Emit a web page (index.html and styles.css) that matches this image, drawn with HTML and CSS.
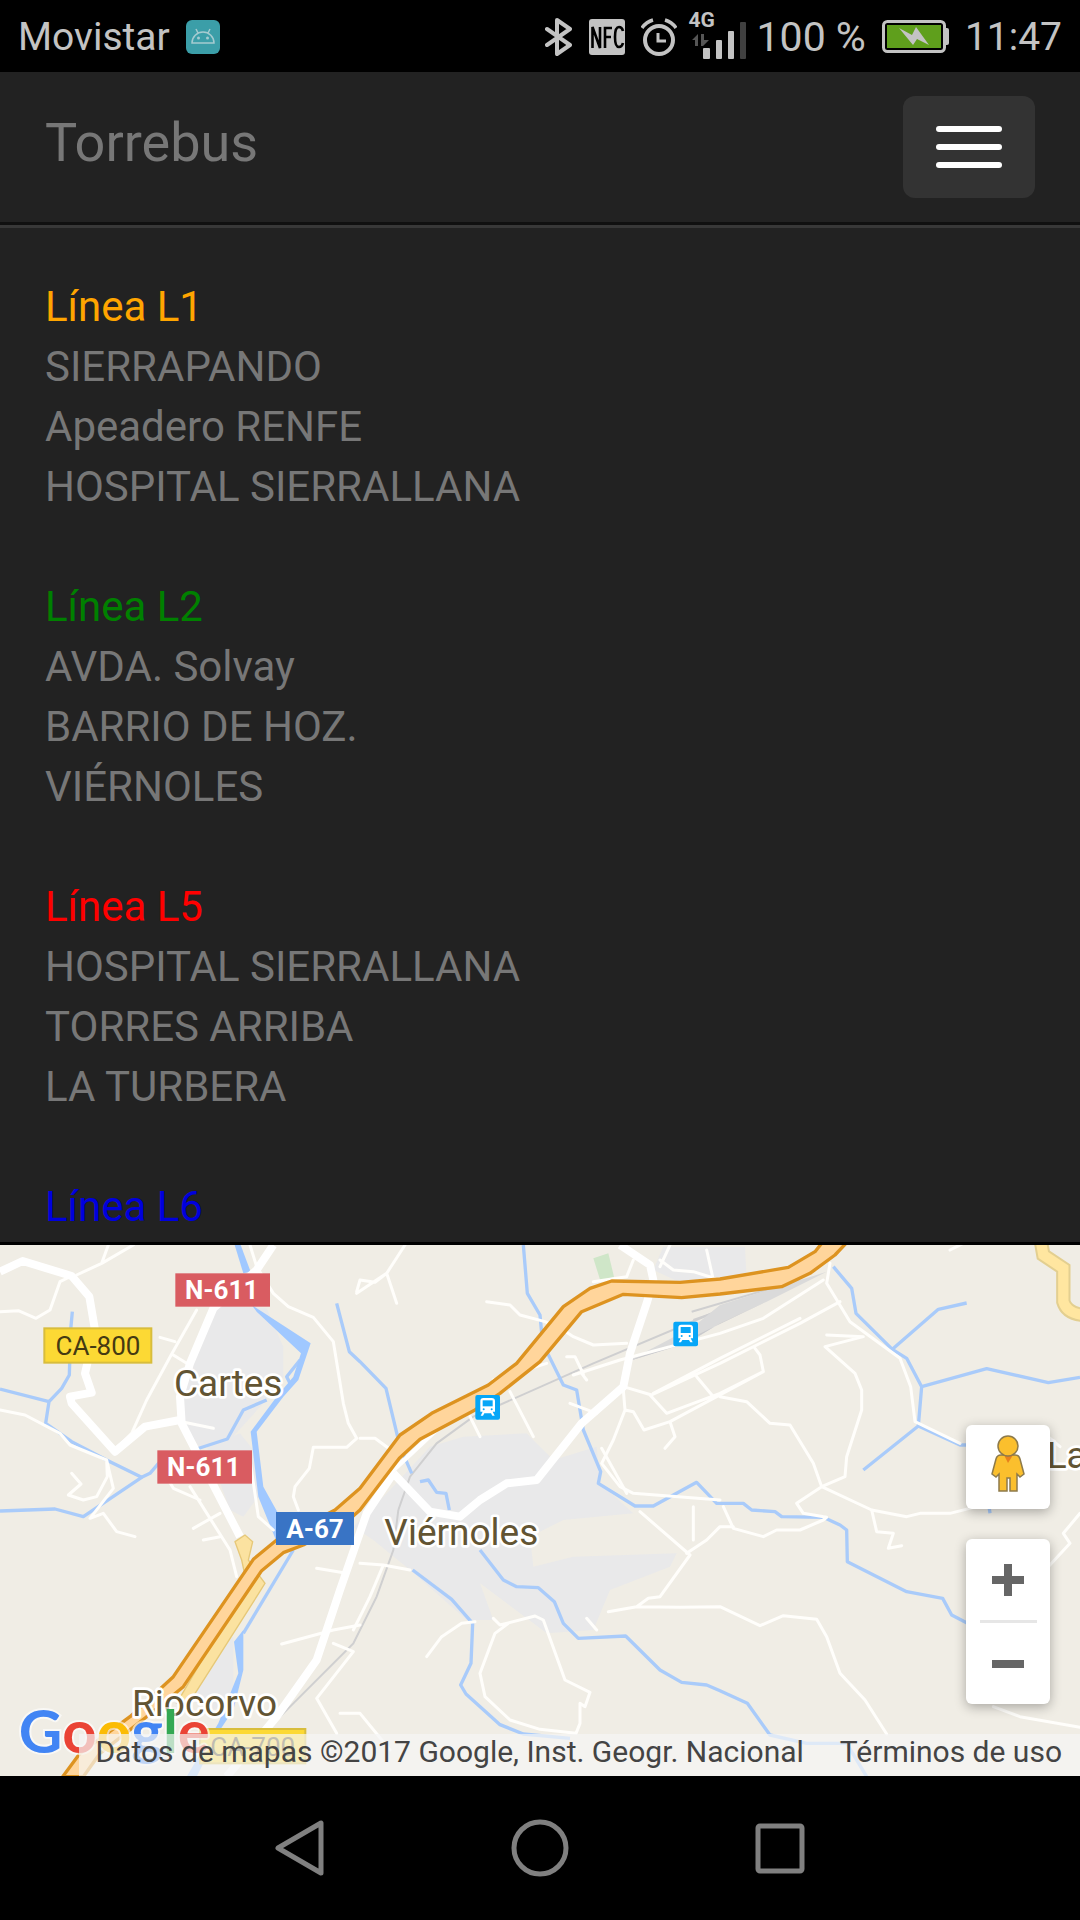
FILE: index.html
```html
<!DOCTYPE html>
<html lang="es">
<head>
  <meta charset="UTF-8">
  <meta name="viewport" content="width=device-width, initial-scale=1.0">
  <title>Torrebus</title>
  <link rel="stylesheet" href="styles.css">
</head>
<body>
  <div class="status-bar">
    <span>Movistar</span>
    <svg class="app-icon" width="34" height="34" viewBox="0 0 34 34">
      <rect width="34" height="34" rx="6" fill="#3b9ea8"/>
      <path d="M6 23a11 11 0 0 1 22 0z M12 13l-2-4 M22 13l2-4" fill="none" stroke="#a5cbd0" stroke-width="1.5"/>
      <circle cx="12.500" cy="18" r="1.500" fill="#a5cbd0"/>
      <circle cx="21.500" cy="18" r="1.500" fill="#a5cbd0"/>
    </svg>
    <div class="status-icons">
      <svg width="28" height="38" viewBox="0 0 28 38">
        <path d="M2 11l23 16-13 9V2l13 9L2 27" fill="none" stroke="#c3c3c3" stroke-width="4" stroke-linejoin="round" stroke-linecap="round"/>
      </svg>
      <svg width="36" height="36" viewBox="0 0 36 36">
        <rect width="36" height="36" rx="3" fill="#c3c3c3"/>
        <path d="M3.500 29V8L11 29V8 M16 29V9h7 M16 18h6 M34 12q-1-4-4-4-4 0-4 10t4 10q3 0 4-4" fill="none" stroke="#000" stroke-width="2.600"/>
      </svg>
      <svg width="36" height="38" viewBox="0 0 36 38">
        <circle cx="18" cy="22" r="14" fill="none" stroke="#c3c3c3" stroke-width="4"/>
        <path d="M17 15v8h8" fill="none" stroke="#c3c3c3" stroke-width="3"/>
        <path d="M1 10q4-6 11-8 M24 2q7 2 11 8" fill="none" stroke="#c3c3c3" stroke-width="3.500"/>
      </svg>
      <div class="signal">
        <span>4G</span>
        <svg width="58" height="44" viewBox="0 0 58 44">
          <path d="M3 25l6-6v12h-3v-6z M12 19h3v6h5l-6 6h-2z" fill="#555"/>
          <rect x="14" y="33" width="7" height="11" rx="1" fill="#c3c3c3"/>
          <rect x="27" y="25" width="6" height="19" rx="1" fill="#c3c3c3"/>
          <rect x="39" y="16" width="6" height="28" rx="1" fill="#c3c3c3"/>
          <rect x="51" y="7" width="6" height="37" rx="1" fill="#404040"/>
        </svg>
      </div>
      <span class="percent">100 %</span>
      <svg class="battery" width="67" height="34" viewBox="0 0 67 34">
        <rect x="1.500" y="1.500" width="61" height="30" rx="4" fill="none" stroke="#c3c3c3" stroke-width="3"/>
        <path d="M63 8h2q2 0 2 2v13q0 2-2 2h-2z" fill="#c3c3c3"/>
        <rect x="5" y="5" width="54" height="23" fill="#5f9f1c"/>
        <path d="M17 8l13 7 4-8 13 18-12-6-4 6z" fill="#c3c3c3"/>
      </svg>
      <span>11:47</span>
    </div>
  </div>

  <header class="navbar">
    <a class="brand" href="#">Torrebus</a>
    <button class="toggle" type="button" aria-label="Menú">
      <span class="icon-bar"></span>
      <span class="icon-bar"></span>
      <span class="icon-bar"></span>
    </button>
  </header>

  <main class="lines">
    <section class="line">
      <h2 class="l1">Línea L1</h2>
      <p>SIERRAPANDO</p>
      <p>Apeadero RENFE</p>
      <p>HOSPITAL SIERRALLANA</p>
    </section>
    <section class="line">
      <h2 class="l2">Línea L2</h2>
      <p>AVDA. Solvay</p>
      <p>BARRIO DE HOZ.</p>
      <p>VIÉRNOLES</p>
    </section>
    <section class="line">
      <h2 class="l5">Línea L5</h2>
      <p>HOSPITAL SIERRALLANA</p>
      <p>TORRES ARRIBA</p>
      <p>LA TURBERA</p>
    </section>
    <section class="line">
      <h2 class="l6">Línea L6</h2>
    </section>
  </main>

  <div class="map">
    <svg class="map-canvas" viewBox="0 45 3240 1593" preserveAspectRatio="xMidYMid slice">
      <rect y="45" width="3240" height="1593" fill="#f0ede5"/>

      <!-- built-up areas -->
      <g fill="#e9e9ea">
        <path d="M635 225L800 235L850 350L850 440L790 520L690 630L600 655L550 580L545 500L580 380z"/>
        <path d="M620 650L720 610L760 660L775 800L730 860L690 840z"/>
        <path d="M640 1270L700 1220L700 1400L640 1440L570 1410z"/>
        <path d="M1390 620L1580 610L1660 690L1790 650L1800 760L1900 850L1690 870L1590 920L1600 1010L1720 980L2030 970L2010 1010L1830 1080L1780 1200L1640 1210L1560 1150L1440 1060L1480 1170L1400 1170L1230 1020L1120 930L1060 890L1170 780L1290 650z"/>
        <path d="M1990 50L2235 50L2240 150L2100 185L1960 120z"/>
      </g>
      <path d="M1780 85L1825 70L1842 140L1802 155z" fill="#cfe6c8"/>

      <!-- railway -->
      <g fill="none" stroke="#cfcfd0" stroke-width="6">
        <path d="M1195 840L1230 740L1310 640L1420 560L1780 400L2160 240"/>
        <path d="M1195 840L1180 960L1130 1100L1060 1240L880 1420L790 1510"/>
        <path d="M2075 245L2400 150 M2080 270L2370 170"/>
      </g>
      <path d="M1880 395L2080 290L2160 225L2480 125L2300 215L2160 280L2070 335z" fill="#dadada"/>
      <path d="M1880 395L2080 320L2320 205L2160 280L2060 340z" fill="#c9c9cc"/>

      <!-- rivers -->
      <g fill="none" stroke="#a9cbfa" stroke-width="10" stroke-linejoin="round">
        <path d="M217 245L212 300L208 435L185 475L147 515L0 477 M147 515L137 580L215 635L330 695L425 742L250 860L165 837L0 843"/>
        <path d="M425 742L450 730L480 695 M590 657L682 627L730 540L800 510"/>
        <path d="M900 390L860 440L870 460"/>
        <path d="M1010 220L1048 365L1080 395L1158 475L1200 650L1235 730"/>
        <path d="M1260 755L1285 750L1310 787L1338 790L1348 840"/>
        <path d="M1570 45L1582 190L1620 255L1628 340L1690 465L1730 480L1750 600L1802 725L1795 760L1905 828L1960 828L2090 757L2150 820L2230 820L2255 840L2325 845L2345 860L2470 862L2520 885L2540 900L2542 995L2720 1085L2828 1105L2855 1155L2960 1210"/>
        <path d="M1440 960L1510 1050L1550 1070L1615 1073L1663 1115L1690 1180L1735 1225L1877 1218L1980 1320L2045 1357L2120 1365L2160 1382L2242 1420L2310 1515L2420 1540L2540 1540L2600 1640"/>
        <path d="M1238 1020L1355 1108L1418 1180L1413 1300L1382 1365L1398 1392L1500 1484L1570 1512L1710 1525"/>
        <path d="M2500 110L2555 175L2568 250L2677 358L2720 385L2765 470L2755 588L2590 720 M2677 358L2815 238L2900 219 M2765 470L2960 416L3145 458L3240 442 M2755 588L2880 645L2940 645L2970 850"/>
        <path d="M880 960L730 1210"/>
      </g>
      <g fill="#a0c8ff">
        <path d="M704 45L722 45L752 125L730 130z"/>
        <path d="M755 225L932 340L895 450L850 500L770 605L790 770L840 860L870 960L840 960L775 800L752 605L830 500L880 440L903 370L770 245z"/>
        <path d="M702 1235L730 1200L730 1320L700 1440L660 1500L590 1640L560 1640L655 1480L715 1330z"/>
      </g>

      <!-- local roads -->
      <g fill="none" stroke="#fffefb" stroke-width="9" stroke-linejoin="round" stroke-linecap="round">
        <path d="M0 245L55 242L108 265L150 240L180 155L215 138 M230 135L305 100L400 45 M305 100L325 45"/>
        <path d="M590 240L515 372L440 510L395 610L340 665 M515 372L560 400 M525 335L480 322"/>
        <path d="M0 540L75 555L180 610L210 645L320 690L340 775L270 865L310 850L350 905L405 920 M320 690L322 740L290 800L250 810L205 795L243 762L215 730"/>
        <path d="M750 45L770 110L820 190L865 230L940 262L1000 335L1030 520L1045 580L1070 625L1040 652L940 652L928 715L885 770L880 800L895 840"/>
        <path d="M545 575L640 595 M600 810L520 775L505 750 M570 770L690 960L710 1040 M660 850L580 895 M610 930L660 920 M750 690L775 860L820 900"/>
        <path d="M1070 190L1160 130L1190 220 M1160 130L1215 45 M1160 130L1125 157L1080 150L1070 185"/>
        <path d="M1460 215L1530 225L1560 255L1635 275L1690 300L1720 320L1780 345L1880 340 M1700 380L1725 380L1750 432 M1720 435L1860 390L2160 310L2290 265L2470 150"/>
        <path d="M1640 400L1480 450 M1530 485L1600 620 M1410 560L1440 620 M1080 625L1125 625L1180 665"/>
        <path d="M1710 520L1790 550 M1870 480L1875 540L1840 630L1805 700L1860 770L1900 790L2160 810 M1875 540L1900 545L1932 600L2010 575L2290 425L2280 375L2265 355 M1870 470L1955 495L2160 400L2400 280L2520 215 M1950 495L2000 550L2160 490L2290 425 M1960 490L2160 385L2400 265 M2090 440L2140 500 M2010 575L2025 620L1995 655"/>
        <path d="M1880 790L1805 655 M1745 430L1760 450 M1900 90L1880 140L1780 155"/>
        <path d="M1980 90L2020 120L2080 125L2160 150 M2010 45L1980 110 M2120 60L2140 150"/>
        <path d="M2490 100L2480 160L2550 275L2700 385L2732 470L2745 575L2880 640 M2480 315L2590 320L2475 350L2565 430L2585 480L2585 540L2540 680L2535 740L2465 770L2390 820L2410 850L2480 862L2470 870L2400 900L2330 900L2290 920L2200 895L2170 830 M2465 770L2440 700L2370 585L2310 580L2240 515L2160 500"/>
        <path d="M2465 770L2615 840L2720 860L2760 850L2850 850L2930 830 M2615 840L2630 905L2680 910L2665 955L2705 947"/>
        <path d="M1920 845L2070 975L1980 1100L1945 1105L1910 1130L1825 1145 M1910 1130L2040 1132L2160 1130L2280 1187L2350 1157L2450 1168L2480 1220L2520 1330L2595 1410L2660 1512 M2060 970L2120 930L2160 890L2200 890 M2080 830L2080 930"/>
        <path d="M1760 1165L1790 1200 M1480 1165L1500 1185L1605 1158L1630 1170L1695 1350L1770 1387L1755 1430L1740 1420L1740 1480L1728 1510L1620 1498L1530 1470L1455 1400L1440 1330L1485 1210L1525 1180"/>
        <path d="M1425 1175L1385 1180L1325 1220L1280 1280 M1080 1000L1150 1005L1230 1020 M1150 1005L1110 1100L1060 1200"/>
        <path d="M845 1242L1000 1200L1080 1185 M950 1015L1040 1030 M1000 1240L1060 1265L950 1405L1010 1510 M1020 1450L1080 1450L1170 1560 M3240 850L3190 910L3210 940L3145 1010 M3120 600L3180 650 M2980 1430L3060 1460L3240 1492 M2850 60L2890 40"/>
      </g>

      <!-- secondary roads -->
      <g fill="none" stroke="#fff" stroke-width="24" stroke-linejoin="round">
        <path d="M0 125L68 93L215 138L268 200L285 300L255 430L275 488L210 500L215 520L345 665L435 590L540 570"/>
        <path d="M820 45L770 120L640 235L570 400L540 500L545 580L720 920"/>
        <path d="M1180 730L1290 845L1380 860L1440 810L1520 760L1610 750L1745 580L1870 470L1890 370L1940 220L1960 150L1950 105L1860 45"/>
        <path d="M1180 730L1100 850L1020 1080L950 1290L830 1460L680 1640"/>
        <path d="M1170 730L1320 590" stroke-width="14"/>
      </g>

      <!-- highway -->
      <g fill="#fbe2a0" stroke="#e6c878" stroke-width="4">
        <path d="M705 935L735 915L758 935L745 990L780 1040L795 1060L770 1100L560 1430L530 1420L740 1060L725 990z"/>
      </g>
      <path d="M188 1640L240 1570L390 1460L520 1340L760 988L830 930L1005 840L1080 775L1200 615L1295 550L1465 465L1550 400L1690 230L1770 175L1835 153L2040 157L2160 147L2365 112L2445 65L2465 40L2538 40L2505 75L2430 130L2345 170L2160 192L2045 203L1870 193L1745 245L1620 395L1500 490L1425 540L1260 628L1198 685L1080 840L1040 875L910 945L850 968L785 1022L550 1370L440 1460L300 1570L250 1640z" fill="#ffd59b" stroke="#dd9320" stroke-width="10" stroke-linejoin="round"/>
      <path d="M3122 30L3130 75L3190 115L3190 215Q3200 250 3250 255" fill="none" stroke="#e3cf90" stroke-width="43"/>
      <path d="M3122 30L3130 75L3190 115L3190 215Q3200 250 3250 255" fill="none" stroke="#ffe6a0" stroke-width="31"/>

      <!-- train stations -->
      <g id="station">
        <rect x="1426" y="495" width="74" height="74" rx="6" fill="#07a6f7"/>
        <path d="M1441 545V513Q1441 504 1450 504H1475Q1485 504 1485 513V545H1478L1484 557H1477L1473 550H1453L1449 557H1442L1448 545z" fill="#fff"/>
        <rect x="1448" y="511" width="30" height="18" fill="#07a6f7"/>
        <circle cx="1451" cy="538" r="3" fill="#07a6f7"/>
        <circle cx="1475" cy="538" r="3" fill="#07a6f7"/>
      </g>
      <use href="#station" x="594" y="-220"/>

      <!-- road shields -->
      <g class="shield">
        <rect x="526" y="130" width="284" height="100" fill="#d95c61"/>
        <text x="665" y="207">N-611</text>
        <rect x="472" y="661" width="284" height="100" fill="#d95c61"/>
        <text x="611" y="738">N-611</text>
        <rect x="828" y="846" width="234" height="99" fill="#3974c5"/>
        <text x="945" y="923">A-67</text>
      </g>
      <g class="shield yellow">
        <rect x="133" y="295" width="321" height="103" fill="#fcd934" stroke="#d8bd3c" stroke-width="6"/>
        <text x="294" y="375">CA-800</text>
        <rect x="600" y="1497" width="316" height="103" fill="#fcd934" stroke="#d8bd3c" stroke-width="6"/>
        <text x="758" y="1577">CA-700</text>
      </g>

      <g class="place">
        <text x="522" y="499">Cartes</text>
        <text x="1153" y="945">Viérnoles</text>
        <text x="396" y="1457">Riocorvo</text>
        <text x="3140" y="714">La</text>
      </g>

      <text class="google" x="56" y="1570"><tspan fill="#4285f4">G</tspan><tspan fill="#ea4335">o</tspan><tspan fill="#fbbc05">o</tspan><tspan fill="#4285f4">g</tspan><tspan fill="#34a853">l</tspan><tspan fill="#ea4335">e</tspan></text>
    </svg>

    <div class="map-controls">
      <button class="pegman" type="button" aria-label="Street View">
        <svg width="34" height="58" viewBox="0 0 34 58">
          <path d="M10 20h14q4 0 5 4l4 15-4 3-3-3v17h-7V43h-3v13h-8V39l-3 3-4-3 4-15q1-4 5-4z" fill="#fbbf2d" stroke="#8d7a4b" stroke-width="1.500"/>
          <path d="M13 20h9l-5 8z" fill="#e8801c"/>
          <circle cx="17" cy="11" r="10" fill="#fbbf2d" stroke="#8d7a4b" stroke-width="1.500"/>
        </svg>
      </button>
      <div class="zoom">
        <button type="button" aria-label="Acercar">
          <svg width="32" height="32" viewBox="0 0 32 32"><path d="M12 0h8v12h12v8H20v12h-8V20H0v-8h12z" fill="#666"/></svg>
        </button>
        <button type="button" aria-label="Alejar">
          <svg width="32" height="32" viewBox="0 0 32 32"><path d="M0 12h32v8H0z" fill="#666"/></svg>
        </button>
      </div>
    </div>

    <div class="attribution">
      <span>Datos de mapas ©2017 Google, Inst. Geogr. Nacional</span>
      <a href="#">Términos de uso</a>
    </div>
  </div>

  <nav class="system-nav">
    <button type="button" aria-label="Atrás">
      <svg width="60" height="60" viewBox="0 0 60 60"><path d="M51 5v50L8 30z" fill="none" stroke="#808080" stroke-width="5" stroke-linejoin="round"/></svg>
    </button>
    <button type="button" aria-label="Inicio">
      <svg width="60" height="60" viewBox="0 0 60 60"><circle cx="30" cy="30" r="26" fill="none" stroke="#808080" stroke-width="5"/></svg>
    </button>
    <button type="button" aria-label="Recientes">
      <svg width="60" height="60" viewBox="0 0 60 60"><rect x="8" y="8" width="44" height="45" rx="2" fill="none" stroke="#808080" stroke-width="5"/></svg>
    </button>
  </nav>
</body>
</html>
```

FILE: styles.css
```css
* {
  box-sizing: border-box;
}

body {
  margin: 0;
  height: 100vh;
  display: flex;
  flex-direction: column;
  background-color: #222;
  color: #777;
  font-family: Roboto, "Liberation Sans", sans-serif;
  font-size: 42px;
  line-height: 60px;
}

button {
  padding: 0;
  border: none;
  background: none;
  cursor: pointer;
}

svg {
  display: block;
}

/* status bar */
.status-bar {
  flex: none;
  display: flex;
  align-items: center;
  height: 72px;
  padding: 2px 18px 0;
  background-color: #000;
  color: #c3c3c3;
  font-size: 39px;
}

.app-icon {
  margin-left: 16px;
}

.status-icons {
  display: flex;
  align-items: center;
  margin-left: auto;
  gap: 16px;
}

.signal {
  position: relative;
  margin-left: -4px;
}

.signal span {
  position: absolute;
  top: -5px;
  left: 0;
  font-size: 21px;
  font-weight: bold;
  line-height: 20px;
}

.percent {
  margin-left: -6px;
  font-size: 41px;
}

/* header */
.navbar {
  flex: none;
  display: flex;
  align-items: center;
  justify-content: space-between;
  height: 153px;
  padding: 0 45px;
  border-bottom: 3px solid #101010;
}

.brand {
  padding-bottom: 8px;
  color: #777;
  font-size: 54px;
  text-decoration: none;
}

.toggle {
  display: flex;
  flex-direction: column;
  align-items: center;
  justify-content: center;
  gap: 12px;
  width: 132px;
  height: 102px;
  border-radius: 12px;
  background-color: #333;
}

.icon-bar {
  width: 66px;
  height: 6px;
  border-radius: 3px;
  background-color: #fff;
}

/* bus lines */
.lines {
  flex: 1;
  min-height: 0;
  overflow-y: auto;
  scrollbar-width: none;
  padding: 49px 45px 0;
  border-top: 3px solid #383838;
}

.line {
  margin-bottom: 60px;
}

.line:last-child {
  margin-bottom: 0;
}

.line h2,
.line p {
  margin: 0;
  font-size: 42px;
  font-weight: normal;
}

.l1 {
  color: orange;
}

.l2 {
  color: green;
}

.l5 {
  color: red;
}

.l6 {
  color: #00d;
}

/* map */
.map {
  flex: none;
  position: relative;
  height: 534px;
  border-top: 3px solid #000;
  overflow: hidden;
}

.map-canvas {
  width: 100%;
  height: 100%;
}

.shield text {
  fill: #fff;
  font-size: 78px;
  font-weight: bold;
  text-anchor: middle;
}

.shield.yellow text {
  fill: #453a12;
  font-weight: normal;
}

.place text {
  fill: #625433;
  stroke: #fff;
  stroke-width: 16px;
  stroke-linejoin: round;
  paint-order: stroke;
  font-size: 111px;
}

.google {
  font-family: Lato, Roboto, sans-serif;
  font-size: 180px;
  font-weight: bold;
  stroke: #fff;
  stroke-opacity: 0.6;
  stroke-width: 12px;
  paint-order: stroke;
}

.map-controls {
  position: absolute;
  right: 30px;
  bottom: 72px;
  display: flex;
  flex-direction: column;
  gap: 30px;
}

.pegman,
.zoom {
  width: 84px;
  border-radius: 6px;
  background-color: #fff;
  box-shadow: 0 3px 12px rgba(0, 0, 0, 0.3);
}

.pegman {
  display: flex;
  align-items: center;
  justify-content: center;
  height: 84px;
  padding-bottom: 6px;
}

.zoom {
  display: flex;
  flex-direction: column;
  align-items: center;
}

.zoom button {
  display: flex;
  align-items: center;
  justify-content: center;
  width: 57px;
  height: 81px;
}

.zoom button + button {
  height: 84px;
  border-top: 3px solid #e6e6e6;
}

.attribution {
  position: absolute;
  right: 0;
  bottom: 0;
  display: flex;
  gap: 36px;
  padding: 0 18px 6px 16px;
  background-color: rgba(245, 245, 245, 0.7);
  color: #444;
  font-size: 30px;
  line-height: 36px;
  white-space: nowrap;
}

.attribution a {
  color: #444;
  text-decoration: none;
}

/* android buttons */
.system-nav {
  flex: none;
  display: flex;
  align-items: center;
  justify-content: center;
  gap: 180px;
  height: 144px;
  background-color: #000;
}
```
